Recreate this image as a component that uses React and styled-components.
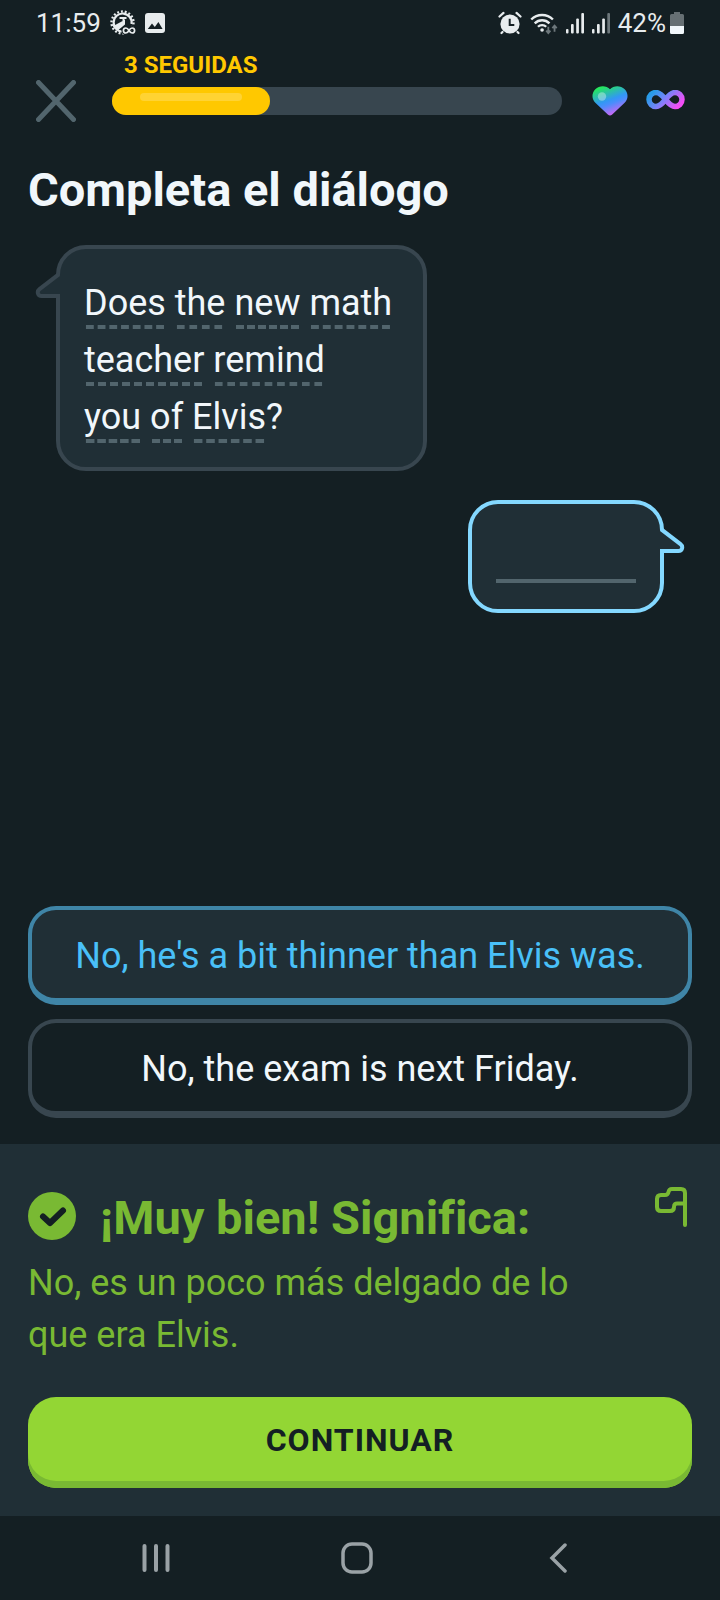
import React from "react";
import styled, { createGlobalStyle } from "styled-components";

const c = {
  bg: "#141f23",
  surface: "#202f36",
  line: "#38464f",
  muted: "#52656d",
  snow: "#f1f7fb",
  yellow: "#ffc800",
  sky: "#84d8ff",
  blue: "#49c0f8",
  blueEdge: "#3f85a7",
  green: "#79b933",
  lime: "#93d634",
  status: "#e8ecee",
  nav: "#9aa2a6",
};

const GlobalStyle = createGlobalStyle`
  * { box-sizing: border-box; }
  body { margin: 0; background: ${c.bg}; }
  button { font: inherit; color: inherit; background: none; border: 0; padding: 0; cursor: pointer; }
  svg { display: block; flex: none; }
`;

const Screen = styled.div`
  display: flex;
  flex-direction: column;
  min-height: 100vh;
  background: ${c.bg};
  color: ${c.snow};
  font-family: Roboto, "Liberation Sans", sans-serif;
  font-size: 36px;
  font-variant-ligatures: none;
`;

const StatusBar = styled.div`
  display: flex;
  align-items: center;
  justify-content: space-between;
  height: 46px;
  padding: 0 36px;
  color: ${c.status};
  font-size: 26px;
  line-height: 46px;
`;

const StatusGroup = styled.div`
  display: flex;
  align-items: center;
  gap: ${(p) => p.$gap}px;
`;

const LessonHeader = styled.header`
  display: grid;
  grid-template-columns: 40px 1fr auto;
  column-gap: 36px;
  align-items: center;
  padding: 6px 35px 0 36px;
`;

const Streak = styled.div`
  grid-column: 2 / 4;
  padding-left: 12px;
  color: ${c.yellow};
  font-size: 24px;
  font-weight: 700;
  line-height: 26px;
`;

const CloseButton = styled.button`
  display: flex;
  width: 40px;
  height: 46px;
  align-items: center;
`;

const Track = styled.div`
  height: 28px;
  border-radius: 14px;
  background: ${c.line};
`;

const Fill = styled.div`
  height: 100%;
  padding: 6px 28px;
  border-radius: 14px;
  background: ${c.yellow};
`;

const Shine = styled.div`
  height: 8px;
  border-radius: 4px;
  background: #ffd333;
`;

const Lives = styled.div`
  display: flex;
  align-items: center;
  gap: 18px;
  margin-left: -6px;
`;

const Main = styled.main`
  display: flex;
  flex: 1;
  flex-direction: column;
  padding: 36px 28px 26px;
`;

const Title = styled.h1`
  margin: 0 0 25px;
  font-size: 47px;
  font-weight: 700;
  line-height: 60px;
`;

const Dialogue = styled.div`
  display: flex;
  flex: 1;
  flex-direction: column;
  gap: 29px;
  padding: 0 28px;
`;

const Bubble = styled.div`
  position: relative;
  align-self: ${(p) => (p.$mine ? "flex-end" : "flex-start")};
  width: ${(p) => (p.$mine ? 196 : 371)}px;
  max-width: 100%;
  padding: ${(p) => (p.$mine ? "26px 24px" : "26px 24px 21px")};
  border: 4px solid ${(p) => (p.$mine ? c.sky : c.line)};
  border-radius: 30px;
  background: ${c.surface};
  line-height: 57px;
`;

const Tail = styled.svg`
  position: absolute;
  top: 21px;
  ${(p) => (p.$mine ? "left: 100%;" : "right: 100%; transform: scaleX(-1);")}
`;

const Sentence = styled.p`
  margin: 0;
  white-space: nowrap;
`;

const Word = styled.span`
  display: inline-block;
  background: linear-gradient(90deg, transparent 2px, ${c.muted} 2px, ${c.muted} 10px, transparent 10px) 0 50px / 12px 4px round no-repeat;
`;

const Blank = styled.div`
  height: 53px;
  border-bottom: 4px solid ${c.muted};
`;

const Options = styled.div`
  display: flex;
  flex-direction: column;
  gap: 14px;
`;

const Option = styled.button`
  min-height: 99px;
  padding: 4px 24px 0;
  border: 4px solid ${(p) => (p.$selected ? c.blueEdge : c.line)};
  border-bottom-width: 7px;
  border-radius: 28px;
  background: ${(p) => (p.$selected ? c.surface : "transparent")};
  color: ${(p) => (p.$selected ? c.blue : c.snow)};
  line-height: 52px;
`;

const Feedback = styled.section`
  padding: 42px 28px 28px;
  background: ${c.surface};
  color: ${c.green};
`;

const FeedbackHead = styled.div`
  display: flex;
  align-items: flex-start;
  gap: 24px;
`;

const CheckBadge = styled.svg`
  margin-top: 6px;
`;

const FeedbackTitle = styled.h2`
  flex: 1;
  margin: 0;
  font-size: 47px;
  font-weight: 700;
  line-height: 64px;
`;

const ReportButton = styled.button`
  margin-right: 4px;
`;

const Meaning = styled.p`
  max-width: 560px;
  margin: 0 0 36px;
  padding-top: 7px;
  line-height: 52px;
`;

const ContinueButton = styled.button`
  width: 100%;
  height: 91px;
  padding-bottom: 6px;
  border-radius: 28px;
  background: ${c.lime};
  box-shadow: inset 0 -7px 0 ${c.green};
  color: ${c.bg};
  font-size: 32px;
  font-weight: 700;
  letter-spacing: 1px;
`;

const NavBar = styled.nav`
  display: grid;
  grid-template-columns: repeat(3, 1fr);
  height: 84px;
  padding: 0 62px 0 56px;
`;

const NavButton = styled.button`
  display: flex;
  align-items: center;
  justify-content: center;
`;

const GearIcon = () => (
  <svg width="26" height="26" viewBox="0 0 26 26" fill="none" stroke={c.status}>
    <circle cx="12.5" cy="12.5" r="11" strokeWidth="2.4" strokeDasharray="1.900 1.940" />
    <path d="M13 21.500A9 9 0 1 1 21.500 14" strokeWidth="2.200" />
    <path d="M9.500 8h7M13.500 8v5M14 11.500L4.500 16.500l3 3L14 14z" strokeWidth="2" fill={c.status} />
    <path d="M19 20.500c-1-1.700-2-2.500-3.100-2.500a2.500 2.500 0 0 0 0 5c1.100 0 2.100-.8 3.100-2.500s2-2.500 3.100-2.500a2.500 2.500 0 0 1 0 5c-1.100 0-2.100-.8-3.100-2.500z" stroke={c.bg} strokeWidth="4" />
    <path d="M19 20.500c-1-1.700-2-2.500-3.100-2.500a2.500 2.500 0 0 0 0 5c1.100 0 2.100-.8 3.100-2.500s2-2.500 3.100-2.500a2.500 2.500 0 0 1 0 5c-1.100 0-2.100-.8-3.100-2.500z" strokeWidth="1.700" />
  </svg>
);

const PictureIcon = () => (
  <svg width="20" height="20" viewBox="0 0 20 20">
    <rect width="20" height="20" rx="3" fill={c.status} />
    <path d="M2.8 16l4.2-5.4 2.8 3.4 3.6-5 4.2 7z" fill={c.bg} />
  </svg>
);

const AlarmIcon = () => (
  <svg width="24" height="24" viewBox="0 0 24 24" fill="none" stroke={c.status} strokeLinecap="round">
    <circle cx="12" cy="13" r="9.6" fill={c.status} stroke="none" />
    <path d="M1.5 5.5l4-3.6M22.5 5.5l-4-3.6M4.5 21l-1 1M19.5 21l1 1" strokeWidth="2.2" />
    <path d="M11.7 7.8v6.3h4.6" stroke={c.bg} strokeWidth="2" strokeLinecap="butt" />
  </svg>
);

const WifiIcon = () => (
  <svg width="28" height="23" viewBox="0 0 29 24" fill="none" stroke={c.status} strokeWidth="2.5">
    <path d="M1.2 7.8a16 16 0 0 1 22.6 0M4.8 11.8a11 11 0 0 1 15.4 0M8.2 15.4a6.2 6.2 0 0 1 8.6 0" />
    <circle cx="12.5" cy="18.800" r="1.900" fill={c.status} stroke="none" />
    <path d="M19 15.5v6M16.8 19.5L19 22l2.2-2.5M25.5 20.5v-6M23.2 16.8l2.3-2.6 2.3 2.6" stroke="#6d777b" strokeWidth="1.9" />
  </svg>
);

const SignalIcon = ({ weak }) => (
  <svg width="18" height="22" viewBox="0 0 18 22" fill={c.status}>
    <rect y="17" width="2.500" height="4.500" rx="1" />
    <rect x="5" y="12" width="2.700" height="9.500" rx="1" />
    <rect x="10.200" y="6.500" width="2.700" height="15" rx="1" />
    <rect x="15.300" y="1" width="2.700" height="20.500" rx="1" fill={weak ? "#6d777b" : c.status} />
  </svg>
);

const BatteryIcon = () => (
  <svg width="14" height="22" viewBox="0 0 14 22">
    <path d="M4 0h6v2h2.500A1.500 1.500 0 0 1 14 3.500V14H0V3.500A1.500 1.500 0 0 1 1.500 2H4z" fill="#666f73" />
    <path d="M0 14h14v6.500A1.500 1.500 0 0 1 12.500 22h-11A1.500 1.500 0 0 1 0 20.500z" fill={c.snow} />
  </svg>
);

const HeartIcon = () => (
  <svg width="36" height="30" viewBox="0 0 36 30" role="img" aria-label="Vidas">
    <defs>
      <linearGradient id="heart" x1="0.2" y1="0" x2="0.65" y2="1">
        <stop offset="0.05" stopColor="#25e85b" />
        <stop offset="0.5" stopColor="#3297f5" />
        <stop offset="0.62" stopColor="#4a8dfc" />
        <stop offset="1" stopColor="#df62f5" />
      </linearGradient>
    </defs>
    <path d="M18 3.200C14.500-.8 7.300-.9 3.300 3.200c-4 4.200-3.600 10 .3 13.700l12.200 11.500c1.500 1.300 2.900 1.300 4.400 0l12.200-11.500c3.900-3.700 4.300-9.500.3-13.700C28.700-.9 21.500-.8 18 3.200z" fill="url(#heart)" />
    <circle cx="10" cy="10.500" r="4.200" fill="#fff" opacity=".35" />
  </svg>
);

const InfinityIcon = () => (
  <svg width="39" height="22" viewBox="0 1 39 22" role="img" aria-label="Ilimitadas">
    <defs>
      <linearGradient id="infinity" x1="0" y1="0.3" x2="1" y2="0.7">
        <stop offset="0" stopColor="#289be8" />
        <stop offset="0.45" stopColor="#7b82fb" />
        <stop offset="1" stopColor="#f34df5" />
      </linearGradient>
    </defs>
    <path d="M19.500 10.500C16 6 13.500 3.500 10 3.500a7 7 0 0 0 0 14c3.500 0 6-2.500 9.500-7s6-7 9.500-7a7 7 0 0 1 0 14c-3.500 0-6-2.500-9.500-7z" fill="none" stroke="url(#infinity)" strokeWidth="5.500" />
  </svg>
);

const BubbleTail = ({ mine }) => (
  <Tail $mine={mine} width="25" height="30" viewBox="0 0 25 30" aria-hidden="true">
    <path d="M0 5h2l18.500 14.200c3 2.400 1.800 6.800-2 6.800H0z" fill={c.surface} />
    <path d="M1 4.200L20.500 19.200c3 2.400 1.800 6.800-2 6.800H0" fill="none" stroke={mine ? c.sky : c.line} strokeWidth="4" />
  </Tail>
);

const lines = [
  [["Does"], ["the"], ["new"], ["math"]],
  [["teacher"], ["remind"]],
  [["you"], ["of"], ["Elvis", "?"]],
];

const options = [
  { text: "No, he's a bit thinner than Elvis was.", selected: true },
  { text: "No, the exam is next Friday.", selected: false },
];

export default function App() {
  return (
    <Screen>
      <GlobalStyle />
      <StatusBar>
        <StatusGroup $gap={9}>
          <span>11:59</span>
          <GearIcon />
          <PictureIcon />
        </StatusGroup>
        <StatusGroup $gap={8}>
          <AlarmIcon />
          <WifiIcon />
          <SignalIcon />
          <SignalIcon weak />
          <StatusGroup $gap={4}>
            <span>42%</span>
            <BatteryIcon />
          </StatusGroup>
        </StatusGroup>
      </StatusBar>

      <LessonHeader>
        <Streak>3 SEGUIDAS</Streak>
        <CloseButton aria-label="Cerrar">
          <svg width="40" height="42" viewBox="0 0 40 42" stroke={c.muted} strokeWidth="5" strokeLinecap="round">
            <path d="M2.500 2.500l35 37M37.500 2.500l-35 37" />
          </svg>
        </CloseButton>
        <Track role="progressbar" aria-label="Progreso" aria-valuenow={35} aria-valuemin={0} aria-valuemax={100}>
          <Fill style={{ width: "35%" }}>
            <Shine />
          </Fill>
        </Track>
        <Lives>
          <HeartIcon />
          <InfinityIcon />
        </Lives>
      </LessonHeader>

      <Main>
        <Title>Completa el diálogo</Title>
        <Dialogue>
          <Bubble>
            <BubbleTail />
            {lines.map((line, i) => (
              <Sentence key={i}>
                {line.map(([word, mark], j) => (
                  <React.Fragment key={word}>
                    {j > 0 && " "}
                    <Word>{word}</Word>
                    {mark}
                  </React.Fragment>
                ))}
              </Sentence>
            ))}
          </Bubble>
          <Bubble $mine>
            <BubbleTail mine />
            <Blank />
          </Bubble>
        </Dialogue>
        <Options>
          {options.map((o) => (
            <Option key={o.text} $selected={o.selected} aria-pressed={o.selected}>
              {o.text}
            </Option>
          ))}
        </Options>
      </Main>

      <Feedback>
        <FeedbackHead>
          <CheckBadge width="48" height="48" viewBox="0 0 48 48" aria-hidden="true">
            <circle cx="24" cy="24" r="24" fill={c.green} />
            <path d="M15 24.500l7 6.500L35 18.500" fill="none" stroke={c.bg} strokeWidth="6" strokeLinecap="round" strokeLinejoin="round" />
          </CheckBadge>
          <FeedbackTitle>¡Muy bien! Significa:</FeedbackTitle>
          <ReportButton aria-label="Reportar">
            <svg width="34" height="42" viewBox="0 0 34 42" fill="none" stroke={c.green} strokeWidth="4" strokeLinecap="round" strokeLinejoin="round">
              <path d="M31 39V7q0-4-4-4H18q-3 0-3.500 3T11 9H7Q3 9 3 13v8q0 4 4 4h9q4 0 4-4t4-3.500h7" />
            </svg>
          </ReportButton>
        </FeedbackHead>
        <Meaning>No, es un poco más delgado de lo que era Elvis.</Meaning>
        <ContinueButton>CONTINUAR</ContinueButton>
      </Feedback>

      <NavBar aria-label="Sistema">
        <NavButton aria-label="Recientes">
          <svg width="28" height="30" viewBox="0 0 28 30" stroke={c.nav} strokeWidth="4" strokeLinecap="round">
            <path d="M2.500 3v24M14 3v24M25.500 3v24" />
          </svg>
        </NavButton>
        <NavButton aria-label="Inicio">
          <svg width="32" height="32" viewBox="0 0 32 32" fill="none" stroke={c.nav} strokeWidth="3.500">
            <rect x="2" y="2" width="28" height="28" rx="9" />
          </svg>
        </NavButton>
        <NavButton aria-label="Atrás">
          <svg width="18" height="30" viewBox="0 0 18 30" fill="none" stroke={c.nav} strokeWidth="3.500" strokeLinecap="round">
            <path d="M16 2L3 15l13 13" />
          </svg>
        </NavButton>
      </NavBar>
    </Screen>
  );
}
